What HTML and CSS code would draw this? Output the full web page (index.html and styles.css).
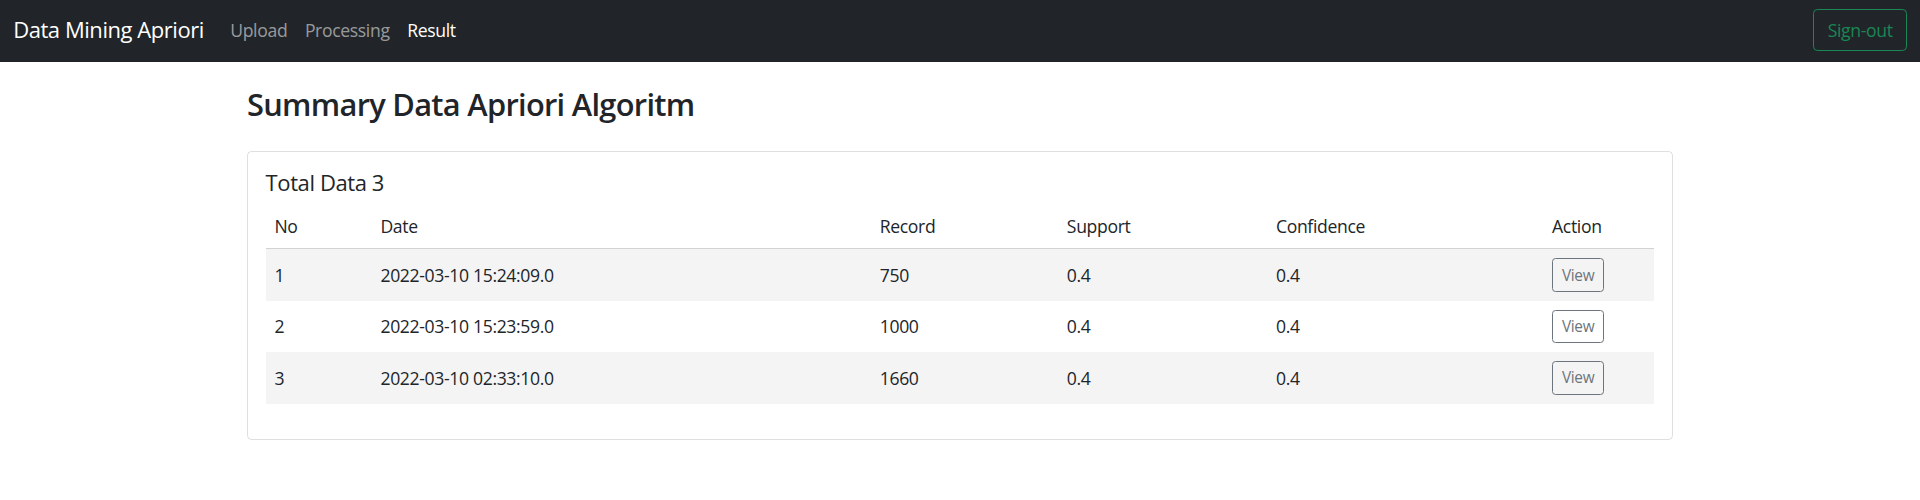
FILE: index.html
```html
<!DOCTYPE html>
<html lang="en">
<head>
<meta charset="utf-8">
<title>Data Mining Apriori</title>
<link rel="stylesheet" href="styles.css">
</head>
<body>
<nav class="navbar">
  <div class="nav-left">
    <a class="brand" href="#">Data Mining Apriori</a>
    <ul class="nav-links">
      <li><a class="nav-link" href="#">Upload</a></li>
      <li><a class="nav-link" href="#">Processing</a></li>
      <li><a class="nav-link active" href="#">Result</a></li>
    </ul>
  </div>
  <button class="btn-signout" type="button">Sign-out</button>
</nav>

<main class="container">
  <h2 class="page-title">Summary Data Apriori Algoritm</h2>
  <div class="card">
    <div class="card-body">
      <h5 class="card-title">Total Data 3</h5>
      <table class="data-table">
        <colgroup>
          <col class="c-no"><col class="c-date"><col class="c-record"><col class="c-support"><col class="c-conf"><col class="c-action">
        </colgroup>
        <thead>
          <tr><th>No</th><th>Date</th><th>Record</th><th>Support</th><th>Confidence</th><th>Action</th></tr>
        </thead>
        <tbody>
          <tr><td>1</td><td>2022-03-10 15:24:09.0</td><td>750</td><td>0.4</td><td>0.4</td><td><button class="btn-view" type="button">View</button></td></tr>
          <tr><td>2</td><td>2022-03-10 15:23:59.0</td><td>1000</td><td>0.4</td><td>0.4</td><td><button class="btn-view" type="button">View</button></td></tr>
          <tr><td>3</td><td>2022-03-10 02:33:10.0</td><td>1660</td><td>0.4</td><td>0.4</td><td><button class="btn-view" type="button">View</button></td></tr>
        </tbody>
      </table>
    </div>
  </div>
</main>
</body>
</html>
```

FILE: styles.css
```css
* { box-sizing: border-box; }

html, body {
  margin: 0;
  padding: 0;
}

body {
  font-family: "Open Sans", "Noto Sans", "Liberation Sans", sans-serif;
  font-size: 17.6px;
  line-height: 1.5;
  letter-spacing: -0.35px;
  color: #212529;
  background: #ffffff;
}

a { text-decoration: none; }

.navbar {
  display: flex;
  align-items: center;
  justify-content: space-between;
  background: #212529;
  height: 61.6px;
  padding: 0 13.2px 2px;
}

.nav-left {
  display: flex;
  align-items: center;
}

.brand {
  color: #ffffff;
  font-size: 22px;
  line-height: 33px;
  letter-spacing: -0.45px;
  margin-right: 17.6px;
}

.nav-links {
  display: flex;
  list-style: none;
  margin: 0;
  padding: 0;
}

.nav-link {
  display: block;
  padding: 8.8px;
  color: rgba(255, 255, 255, 0.55);
}

.nav-link.active {
  color: #ffffff;
}

.btn-signout {
  font-family: inherit;
  font-size: 17.6px;
  line-height: 1.5;
  letter-spacing: -0.35px;
  padding: 6.6px 13.2px;
  color: #198754;
  background: transparent;
  border: 1px solid #198754;
  border-radius: 4.4px;
}

.container {
  width: 1426px;
  margin: 0 auto;
  padding-top: 24px;
}

.page-title {
  font-size: 30.8px;
  font-weight: 600;
  line-height: 1.2;
  letter-spacing: -0.7px;
  margin: 0 0 28px;
}

.card {
  border: 1px solid rgba(0, 0, 0, 0.125);
  border-radius: 4.4px;
}

.card-body {
  padding: 17.6px;
}

.card-title {
  font-size: 22px;
  font-weight: 400;
  line-height: 1.2;
  letter-spacing: -0.4px;
  margin: 0 0 8.8px;
}

.data-table {
  width: 100%;
  border-collapse: collapse;
  table-layout: fixed;
  margin-bottom: 17.6px;
}

.c-no { width: 106px; }
.c-date { width: 499px; }
.c-record { width: 187px; }
.c-support { width: 209px; }
.c-conf { width: 276px; }
.c-action { width: 111px; }

.data-table th,
.data-table td {
  text-align: left;
  font-weight: 400;
  padding: 8.8px;
  vertical-align: middle;
}

.data-table thead th {
  border-bottom: 1px solid #d2d2d2;
}

.data-table tbody tr:nth-child(odd) {
  background: #f4f4f4;
}

.btn-view {
  font-family: inherit;
  font-size: 15.4px;
  line-height: 1.5;
  letter-spacing: -0.3px;
  padding: 4.4px 8.8px;
  color: #6c757d;
  background: transparent;
  border: 1px solid #6c757d;
  border-radius: 3.5px;
}
```
